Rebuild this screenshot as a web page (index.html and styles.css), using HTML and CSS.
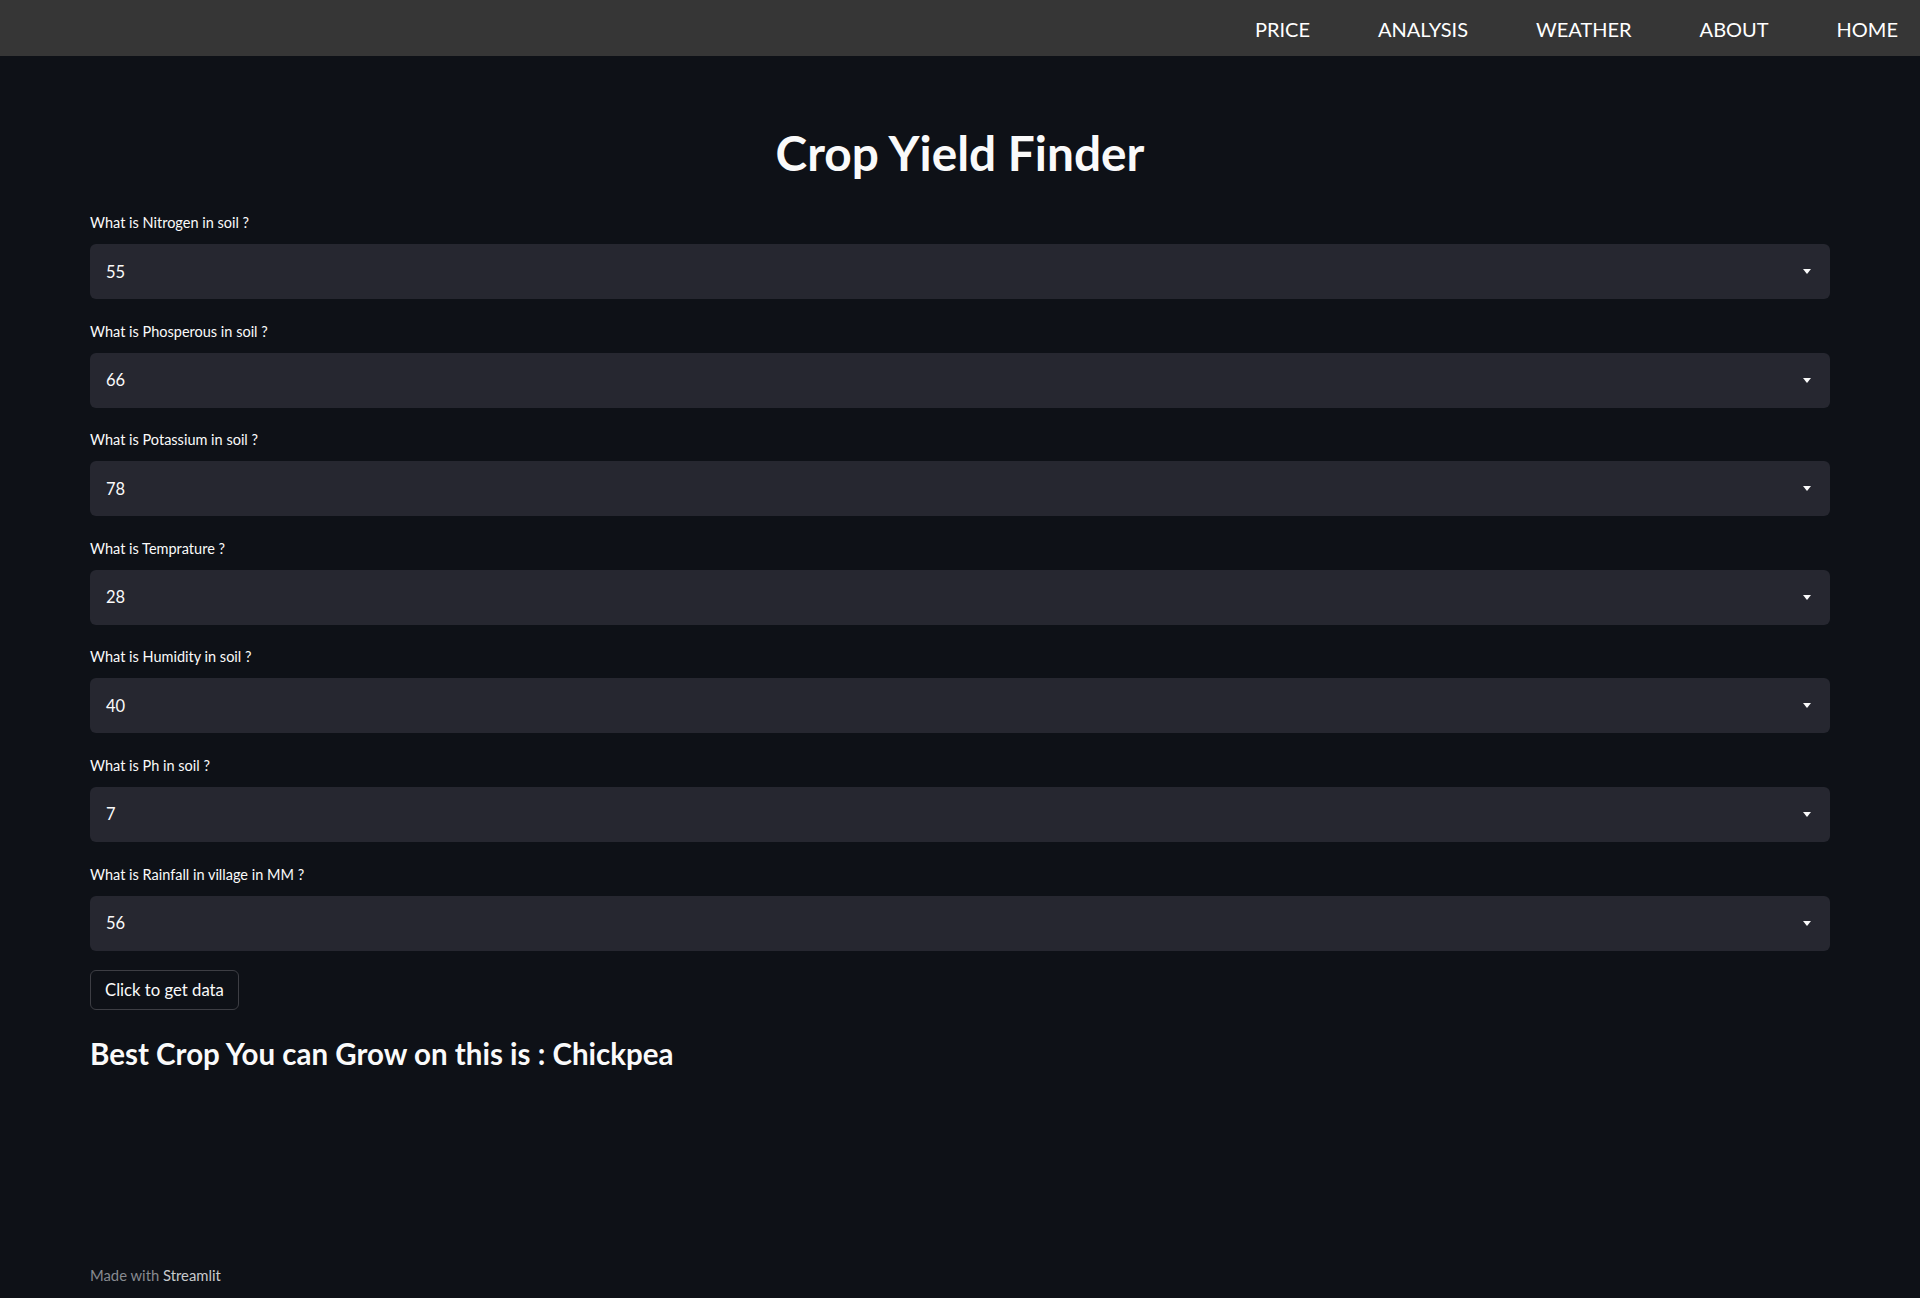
FILE: index.html
```html
<!DOCTYPE html>
<html lang="en">
<head>
<meta charset="utf-8">
<title>Crop Yield Finder</title>
<link rel="stylesheet" href="styles.css">
</head>
<body>
<div class="page">
  <nav class="topnav">
    <a class="nav-link" href="#">PRICE</a>
    <a class="nav-link" href="#">ANALYSIS</a>
    <a class="nav-link" href="#">WEATHER</a>
    <a class="nav-link" href="#">ABOUT</a>
    <a class="nav-link" href="#">HOME</a>
  </nav>
  <main class="main">
    <h1 class="title">Crop Yield Finder</h1>

    <div class="field">
      <div class="label">What is Nitrogen in soil ?</div>
      <div class="select"><span class="value">55</span><svg class="caret" width="8" height="5" viewBox="0 0 8 5"><polygon points="0,0 8,0 4,5" fill="#fafafa"/></svg></div>
    </div>
    <div class="field">
      <div class="label">What is Phosperous in soil ?</div>
      <div class="select"><span class="value">66</span><svg class="caret" width="8" height="5" viewBox="0 0 8 5"><polygon points="0,0 8,0 4,5" fill="#fafafa"/></svg></div>
    </div>
    <div class="field">
      <div class="label">What is Potassium in soil ?</div>
      <div class="select"><span class="value">78</span><svg class="caret" width="8" height="5" viewBox="0 0 8 5"><polygon points="0,0 8,0 4,5" fill="#fafafa"/></svg></div>
    </div>
    <div class="field">
      <div class="label">What is Temprature ?</div>
      <div class="select"><span class="value">28</span><svg class="caret" width="8" height="5" viewBox="0 0 8 5"><polygon points="0,0 8,0 4,5" fill="#fafafa"/></svg></div>
    </div>
    <div class="field">
      <div class="label">What is Humidity in soil ?</div>
      <div class="select"><span class="value">40</span><svg class="caret" width="8" height="5" viewBox="0 0 8 5"><polygon points="0,0 8,0 4,5" fill="#fafafa"/></svg></div>
    </div>
    <div class="field">
      <div class="label">What is Ph in soil ?</div>
      <div class="select"><span class="value">7</span><svg class="caret" width="8" height="5" viewBox="0 0 8 5"><polygon points="0,0 8,0 4,5" fill="#fafafa"/></svg></div>
    </div>
    <div class="field last">
      <div class="label">What is Rainfall in village in MM ?</div>
      <div class="select"><span class="value">56</span><svg class="caret" width="8" height="5" viewBox="0 0 8 5"><polygon points="0,0 8,0 4,5" fill="#fafafa"/></svg></div>
    </div>

    <button class="btn" type="button">Click to get data</button>

    <h3 class="result">Best Crop You can Grow on this is : Chickpea</h3>
  </main>
  <footer class="footer">Made with <span class="brand">Streamlit</span></footer>
</div>
</body>
</html>
```
FILE: styles.css
```css
* { box-sizing: border-box; }
html, body { margin: 0; padding: 0; }
body {
  background: #0e1117;
  color: #fafafa;
  font-family: "Lato", "Roboto", sans-serif;
}
.page {
  min-height: 1298px;
  display: flex;
  flex-direction: column;
}
.topnav {
  height: 56px;
  background: #363636;
  display: flex;
  justify-content: flex-end;
  align-items: center;
  gap: 68px;
  padding-right: 22px;
}
.nav-link {
  color: #ffffff;
  text-decoration: none;
  font-size: 20px;
  line-height: 24px;
  padding-top: 2px;
}
.main {
  padding: 0 90px;
  display: flex;
  flex-direction: column;
  align-items: flex-start;
}
.title {
  align-self: stretch;
  text-align: center;
  margin: 64px 0 23px;
  font-size: 47.8px;
  font-weight: 700;
  line-height: 66px;
  color: #fafafa;
}
.field {
  align-self: stretch;
  margin-bottom: 18.6px;
}
.field.last { margin-bottom: 19.5px; }
.label {
  font-size: 14.5px;
  line-height: 28px;
  height: 28px;
  margin-bottom: 7px;
  color: #fafafa;
}
.select {
  height: 55px;
  background: #262730;
  border-radius: 6px;
  display: flex;
  align-items: center;
  justify-content: space-between;
  padding: 0 19px 0 16px;
}
.value {
  font-size: 16.5px;
  color: #fafafa;
}
.caret { display: block; }
.btn {
  height: 40px;
  padding: 0 14px;
  background: transparent;
  border: 1px solid #3d3e44;
  border-radius: 6px;
  color: #fafafa;
  font-family: "Lato", "Roboto", sans-serif;
  font-size: 16.7px;
  line-height: 1;
  cursor: pointer;
}
.result {
  margin: 26px 0 0;
  font-size: 29.5px;
  font-weight: 700;
  line-height: 35.4px;
  color: #fafafa;
}
.footer {
  margin-top: auto;
  padding: 0 90px 11px;
  font-size: 14.8px;
  line-height: 24px;
  color: #878a90;
}
.brand { color: #c8cacd; }
```
